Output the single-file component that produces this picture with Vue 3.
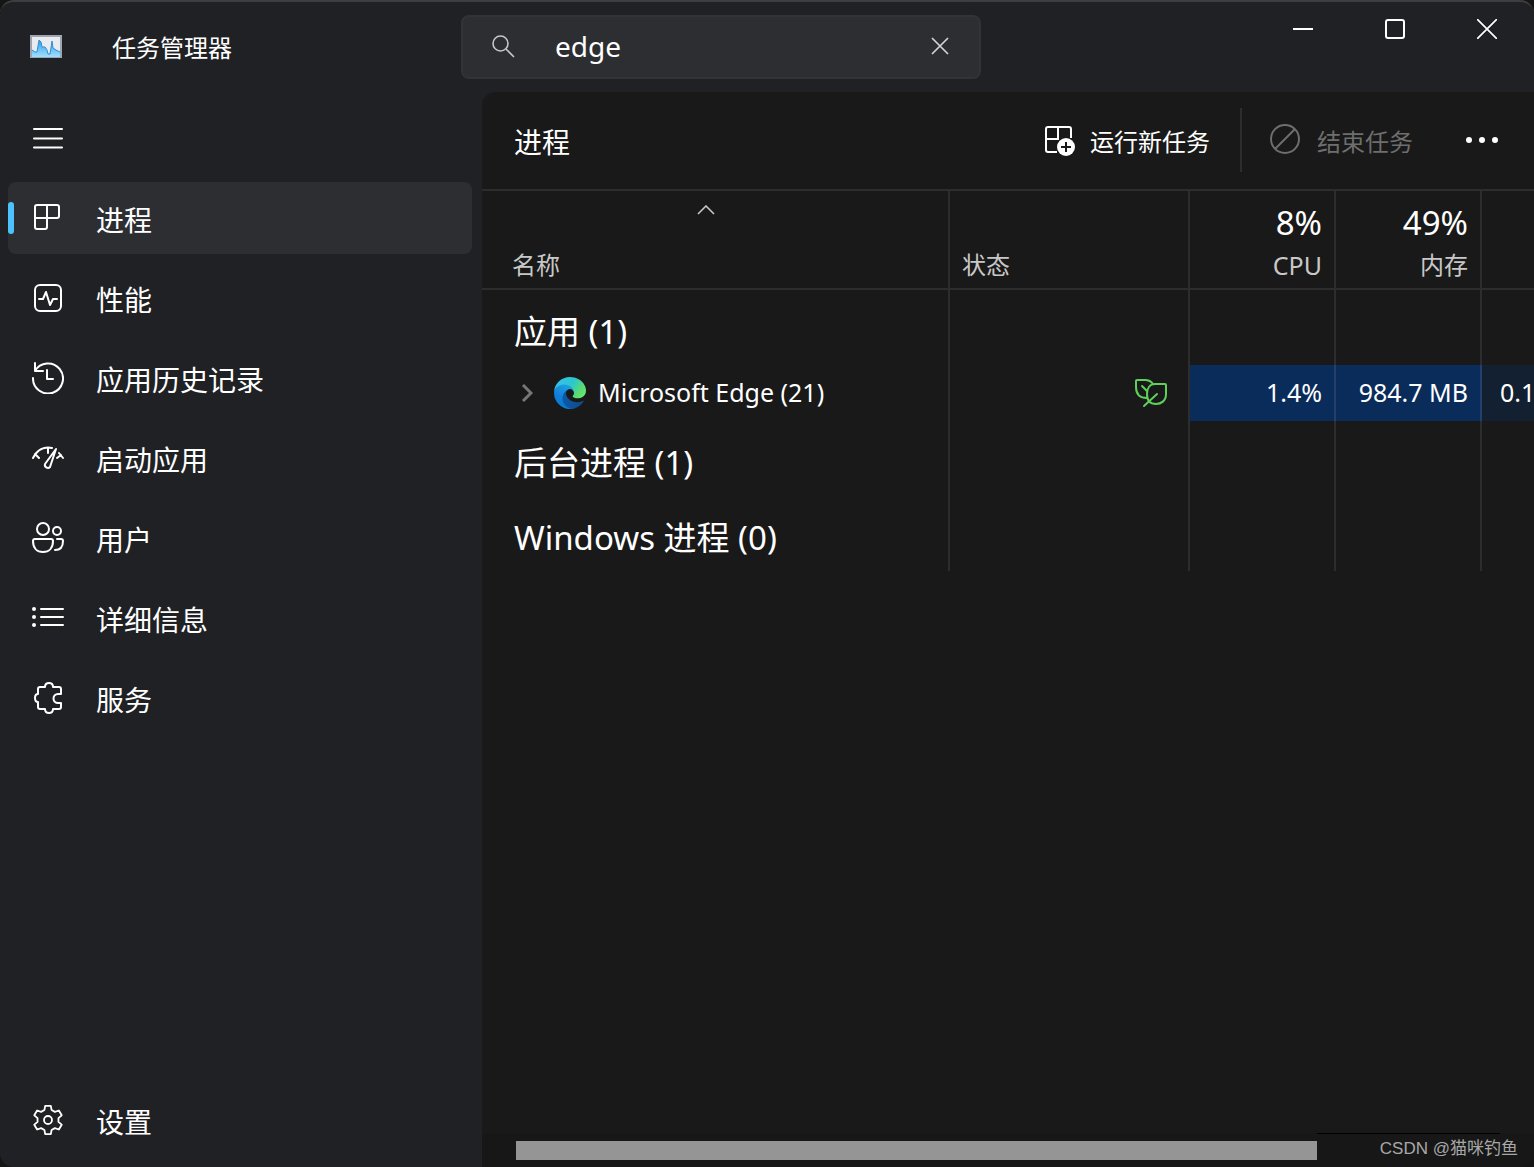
<script setup>
import { ref } from 'vue'

const query = ref('edge')

const navItems = [
  { id: 'processes', label: '进程', active: true },
  { id: 'performance', label: '性能' },
  { id: 'history', label: '应用历史记录' },
  { id: 'startup', label: '启动应用' },
  { id: 'users', label: '用户' },
  { id: 'details', label: '详细信息' },
  { id: 'services', label: '服务' }
]

// Six-toothed cog outline around the centre of a 32px box
function cogPath() {
  const local = [[-3.6, 10], [-2.8, 14.2], [2.8, 14.2], [3.6, 10]]
  const points = []
  for (let tooth = 0; tooth < 6; tooth++) {
    const a = (tooth * Math.PI) / 3
    for (const [side, out] of local) {
      const x = 16 + out * Math.sin(a) + side * Math.cos(a)
      const y = 16 - out * Math.cos(a) + side * Math.sin(a)
      points.push(`${x.toFixed(2)} ${y.toFixed(2)}`)
    }
  }
  return `M${points.join('L')}Z`
}
const cog = cogPath()
</script>

<template>
  <div class="window">
    <header class="titlebar">
      <div class="brand">
        <svg class="app-icon" width="32" height="24" viewBox="0 0 32 24" aria-hidden="true">
          <defs>
            <linearGradient id="graph" x1="0" y1="0" x2="0" y2="1">
              <stop offset="0" stop-color="#2f9be6" />
              <stop offset="1" stop-color="#9fe0ff" />
            </linearGradient>
          </defs>
          <rect width="32" height="23" fill="#9ba6b2" />
          <rect x="2" y="2" width="28" height="20" fill="#e9ebef" />
          <path d="M2 15l3 2h2L9 5l2 2 1 5h3l2 3 1 4h2l2-13 1 7 3 2 4 2v5H2z" fill="url(#graph)" />
          <path d="M2 15l3 2h2L9 5l2 2 1 5h3l2 3 1 4h2l2-13 1 7 3 2 4 2" fill="none" stroke="#2b8fd8" />
        </svg>
        <h1 class="app-name">任务管理器</h1>
      </div>
      <label class="search">
        <svg width="24" height="24" viewBox="0 0 24 24" fill="none" stroke="#c6c6c8" stroke-width="1.6" aria-hidden="true">
          <circle cx="9.5" cy="9.5" r="7.5" />
          <path d="M15 15l8 8" />
        </svg>
        <input v-model="query" class="search-input" type="text" aria-label="搜索" />
        <button class="clear" type="button" aria-label="清除" @click="query = ''">
          <svg width="18" height="18" viewBox="0 0 18 18" fill="none" stroke="#d4d4d6" stroke-width="1.7"><path d="M1 1l16 16M17 1L1 17" /></svg>
        </button>
      </label>
      <div class="window-buttons">
        <button type="button" aria-label="最小化">
          <svg width="20" height="20" viewBox="0 0 20 20" fill="none" stroke="#fff" stroke-width="2"><path d="M0 10h20" /></svg>
        </button>
        <button type="button" aria-label="最大化">
          <svg width="20" height="20" viewBox="0 0 20 20" fill="none" stroke="#fff" stroke-width="2"><rect x="1" y="1" width="18" height="18" rx="2" /></svg>
        </button>
        <button type="button" aria-label="关闭">
          <svg width="20" height="20" viewBox="0 0 20 20" fill="none" stroke="#fff" stroke-width="1.7"><path d="M0 0l20 20M20 0L0 20" /></svg>
        </button>
      </div>
    </header>

    <div class="body">
      <nav class="sidebar">
        <button class="menu" type="button" aria-label="打开导航">
          <svg width="32" height="24" viewBox="0 0 32 24" fill="none" stroke="#fff" stroke-width="2" stroke-linecap="round"><path d="M2 3h28M2 12.5h28M2 21.5h28" /></svg>
        </button>
        <button v-for="item in navItems" :key="item.id" type="button" class="nav-item" :class="{ active: item.active }">
          <svg class="nav-icon" width="32" height="32" viewBox="0 0 32 32" fill="none" stroke="#fff" stroke-width="2" stroke-linecap="round" stroke-linejoin="round" aria-hidden="true">
            <path v-if="item.id === 'processes'" d="M5 3h20a2 2 0 0 1 2 2v9a2 2 0 0 1-2 2H3V5a2 2 0 0 1 2-2zM15 3v22a2 2 0 0 1-2 2H5a2 2 0 0 1-2-2V16" />
            <g v-else-if="item.id === 'performance'">
              <rect x="3" y="3" width="26" height="26" rx="5" />
              <path d="M7 17h4l3-7 4 13 3-6h4" />
            </g>
            <path v-else-if="item.id === 'history'" d="M3 1v8h8M3 9a15 15 0 1 1-2 7M15 8v9h6" />
            <g v-else-if="item.id === 'startup'">
              <path d="M1 16C5 8 12 4 20 6M3 12l4 4M16 6v5M27 11l4 5M25 16l4-3" />
              <path d="M24 7L13 22a3 3 0 0 0 5 3L24 7z" />
            </g>
            <g v-else-if="item.id === 'users'">
              <circle cx="11" cy="7" r="6" />
              <circle cx="25" cy="9" r="4" />
              <path d="M3 17h16a2 2 0 0 1 2 2c0 7-4 11-10 11S1 26 1 19a2 2 0 0 1 2-2zM25 17h4a2 2 0 0 1 2 2c0 6-3 9-8 9" />
            </g>
            <g v-else-if="item.id === 'details'">
              <path d="M9 7h22M9 15h22M9 23h22" />
              <path d="M2 7h.01M2 15h.01M2 23h.01" stroke-width="4" />
            </g>
            <path v-else d="M8 5h5c0-2 1-4 4-4s4 2 4 4h6a2 2 0 0 1 2 2v5h-3a4 4 0 0 0 0 9h3v4a2 2 0 0 1-2 2h-6c0 2-1 4-4 4s-4-2-4-4H8a2 2 0 0 1-2-2v-5c-2 0-3-2-3-4s1-4 3-4V7a2 2 0 0 1 2-2z" />
          </svg>
          <span class="nav-label">{{ item.label }}</span>
        </button>
        <button type="button" class="nav-item settings">
          <svg class="nav-icon" width="32" height="32" viewBox="0 0 32 32" fill="none" stroke="#fff" stroke-width="1.8" stroke-linejoin="round" aria-hidden="true">
            <path :d="cog" />
            <circle cx="16" cy="16" r="4" />
          </svg>
          <span class="nav-label">设置</span>
        </button>
      </nav>

      <main class="content">
        <div class="toolbar">
          <h2 class="page-title">进程</h2>
          <button class="tool run" type="button">
            <svg width="32" height="32" viewBox="0 0 32 32" fill="none" stroke="#fff" stroke-width="2" stroke-linejoin="round" aria-hidden="true">
              <path d="M27 13V4a2 2 0 0 0-2-2H4a2 2 0 0 0-2 2v21a2 2 0 0 0 2 2h9M14 2v12M2 14h13" />
              <circle cx="22" cy="22" r="9" fill="#fff" stroke="none" />
              <path d="M22 17v10M17 22h10" stroke="#191919" />
            </svg>
            <span>运行新任务</span>
          </button>
          <button class="tool end" type="button" disabled>
            <svg width="32" height="32" viewBox="0 0 32 32" fill="none" stroke="#6e6e6e" stroke-width="2" aria-hidden="true">
              <circle cx="16" cy="16" r="14" />
              <path d="M6 26L26 6" />
            </svg>
            <span>结束任务</span>
          </button>
          <button class="more" type="button" aria-label="更多选项">
            <svg width="32" height="8" viewBox="0 0 32 8" fill="#fff"><circle cx="3" cy="4" r="3" /><circle cx="16" cy="4" r="3" /><circle cx="29" cy="4" r="3" /></svg>
          </button>
        </div>

        <div class="table-area">
          <table class="processes">
            <colgroup>
              <col class="col-name" />
              <col class="col-status" />
              <col class="col-metric" />
              <col class="col-metric" />
              <col />
            </colgroup>
            <thead>
              <tr>
                <th class="name" scope="col" aria-sort="ascending">
                  <svg class="caret" width="18" height="10" viewBox="0 0 18 10" fill="none" stroke="#c8c8c8" stroke-width="1.6"><path d="M1 9l8-8 8 8" /></svg>
                  <span class="label">名称</span>
                </th>
                <th class="status" scope="col"><span class="label">状态</span></th>
                <th class="metric" scope="col"><span class="total">8%</span><span class="label latin">CPU</span></th>
                <th class="metric" scope="col"><span class="total">49%</span><span class="label">内存</span></th>
                <td></td>
              </tr>
            </thead>
            <tbody>
              <tr class="group"><th scope="rowgroup">应用 (1)</th><td></td><td></td><td></td><td></td></tr>
              <tr class="process">
                <td>
                  <div class="process-name">
                    <svg class="expand" width="12" height="18" viewBox="0 0 12 18" fill="none" stroke="#767676" stroke-width="3"><path d="M2 1l8 8-8 8" /></svg>
                    <svg width="32" height="32" viewBox="0 0 256 256" aria-hidden="true">
                      <defs>
                        <linearGradient id="edge-dark" x1="0.1" y1="0.6" x2="1" y2="0.6"><stop offset="0" stop-color="#0c59a4" /><stop offset="1" stop-color="#114a8b" /></linearGradient>
                        <linearGradient id="edge-blue" x1="0.7" y1="0.2" x2="0.3" y2="1"><stop offset="0" stop-color="#1b9de2" /><stop offset="0.5" stop-color="#1480d8" /><stop offset="1" stop-color="#0078d4" /></linearGradient>
                        <linearGradient id="edge-green" x1="0" y1="0.3" x2="1" y2="0.8"><stop offset="0" stop-color="#35c1f1" /><stop offset="0.45" stop-color="#2dc6cc" /><stop offset="0.8" stop-color="#5bdc70" /><stop offset="1" stop-color="#66eb6e" /></linearGradient>
                      </defs>
                      <path fill="url(#edge-dark)" d="M231 190.500c-3.400 1.800-6.900 3.400-10.500 4.700a101.500 101.500 0 0 1-35.900 6.400c-47.300 0-88.500-32.500-88.500-74.300a31.500 31.500 0 0 1 16.400-27.300c-42.800 1.800-53.800 46.400-53.800 72.500 0 74 68.100 81.400 82.800 81.400 7.900 0 19.800-2.300 27-4.600l1.300-.4a128.300 128.300 0 0 0 66.600-52.800 4 4 0 0 0-5.400-5.600z" />
                      <path fill="url(#edge-blue)" d="M105.700 241.400a79.200 79.200 0 0 1-22.700-21.300 80.700 80.700 0 0 1 29.500-120c3.200-1.500 8.500-4.100 15.600-4a32.400 32.400 0 0 1 25.700 13 31.900 31.900 0 0 1 6.300 18.700c0-.2 24.500-79.600-80-79.600-43.900 0-80 41.600-80 78.200a130.200 130.200 0 0 0 12.100 56 128 128 0 0 0 156.400 67 75.500 75.500 0 0 1-62.800-8z" />
                      <path fill="url(#edge-green)" d="M152.300 148.900c-.9 1-3.400 2.500-3.400 5.600 0 2.600 1.700 5.200 4.800 7.300 14.300 10 41.400 8.600 41.500 8.600a59.600 59.600 0 0 0 30.300-8.300 61.400 61.400 0 0 0 30.400-52.900c.3-22.400-8-37.300-11.300-43.900C223.500 23.900 177.700 0 128 0A128 128 0 0 0 0 126.200c.5-36.500 36.800-66 80-66 3.500 0 23.500.3 42 10.100 16.300 8.600 24.900 19 30.800 29.200 6.200 10.700 7.300 24.100 7.300 29.500 0 5.300-2.700 13.300-7.800 19.900z" />
                    </svg>
                    <span>Microsoft Edge (21)</span>
                  </div>
                </td>
                <td class="efficiency">
                  <svg width="34" height="30" viewBox="0 0 34 30" fill="none" stroke="#5fd05a" stroke-width="2" stroke-linecap="round" stroke-linejoin="round" role="img" aria-label="效率模式">
                    <path d="M19 6C17 3 14 2 11 2H3a1 1 0 0 0-1 1v6c0 7 4 11 11 11" />
                    <path d="M21 6h10a1 1 0 0 1 1 1v9c0 7-5 10-10 10-6 0-9-4-9-10S16 6 21 6z" />
                    <path d="M8 8l5 5M23 16L10 28" />
                  </svg>
                </td>
                <td class="metric hot">1.4%</td>
                <td class="metric hot">984.7 MB</td>
                <td class="disk">0.1</td>
              </tr>
              <tr class="group"><th scope="rowgroup">后台进程 (1)</th><td></td><td></td><td></td><td></td></tr>
              <tr class="group"><th scope="rowgroup">Windows 进程 (0)</th><td></td><td></td><td></td><td></td></tr>
            </tbody>
          </table>
        </div>

        <footer class="scroll-row">
          <div class="scroll-thumb"></div>
          <div class="scroll-rest"></div>
          <span class="watermark">CSDN @猫咪钓鱼</span>
        </footer>
      </main>
    </div>
  </div>
</template>

<style>
html,
body {
  margin: 0;
  background: #151515;
}
</style>

<style scoped>
* {
  box-sizing: border-box;
}

.window {
  display: flex;
  flex-direction: column;
  min-height: 100vh;
  overflow: hidden;
  border-top: 2px solid #3e3e40;
  border-radius: 14px;
  background: #202125;
  color: #fff;
  font-family: "Noto Sans", "Noto Sans CJK SC", sans-serif;
  font-size: 24px;
  line-height: 36px;
}

button {
  display: flex;
  align-items: center;
  padding: 0;
  border: 0;
  background: none;
  color: inherit;
  font: inherit;
}

svg {
  flex: none;
  display: block;
}

h1,
h2 {
  margin: 0;
  font-weight: 400;
}

.titlebar {
  display: grid;
  grid-template-columns: 461px 520px 1fr;
  height: 90px;
}

.brand {
  display: flex;
  align-items: center;
  gap: 50px;
  height: 90px;
  padding: 0 0 0 30px;
}

.app-name {
  padding-top: 2px;
  font-size: 24px;
}

.search {
  display: flex;
  align-items: center;
  height: 64px;
  margin-top: 13px;
  padding: 0 30px 2px 28px;
  border: 2px solid #323337;
  border-radius: 8px;
  background: #2d2e32;
}

.search-input {
  flex: 1;
  min-width: 0;
  margin-left: 40px;
  padding: 0;
  border: 0;
  outline: 0;
  background: none;
  color: #fff;
  font: inherit;
  font-size: 28px;
}

.window-buttons {
  display: flex;
  justify-content: flex-end;
  padding-right: 1px;
}

.window-buttons button {
  justify-content: center;
  width: 92px;
  height: 54px;
}

.body {
  display: flex;
  flex: 1;
}

.sidebar {
  display: flex;
  flex: none;
  flex-direction: column;
  gap: 8px;
  width: 482px;
  padding: 10px 10px 11px 8px;
}

.menu {
  height: 72px;
  padding-left: 24px;
}

.nav-item {
  position: relative;
  gap: 32px;
  height: 72px;
  padding: 4px 0 0 24px;
  border-radius: 8px;
  font-size: 28px;
  text-align: left;
}

.nav-icon {
  margin-bottom: 4px;
}

.nav-item.active {
  background: #2d2e32;
}

.nav-item.active::before {
  content: "";
  position: absolute;
  left: 0;
  top: 20px;
  width: 6px;
  height: 32px;
  border-radius: 3px;
  background: #4cc2ff;
}

.settings {
  margin-top: auto;
}

.content {
  display: flex;
  flex: 1;
  flex-direction: column;
  min-width: 0;
  overflow: hidden;
  border-top-left-radius: 14px;
  background: #191919;
}

.toolbar {
  display: flex;
  align-items: center;
  height: 99px;
  padding: 0 36px 2px 32px;
  border-bottom: 2px solid #2d2d2d;
}

.page-title {
  flex: 1;
  padding-top: 4px;
  font-size: 28px;
}

.tool {
  height: 64px;
}

.tool span {
  padding-top: 4px;
}

.run {
  gap: 14px;
  padding-right: 30px;
  border-right: 2px solid #2d2d2d;
}

.run svg {
  margin-top: 2px;
}

.end {
  gap: 16px;
  padding-left: 27px;
  color: #6e6e6e;
}

.end svg {
  margin-bottom: 2px;
}

.more {
  height: 64px;
  margin-left: 53px;
}

.table-area {
  flex: 1;
  overflow: hidden;
}

.processes {
  width: 100%;
  border-spacing: 0;
  table-layout: fixed;
}

.col-name {
  width: 468px;
}

.col-status {
  width: 240px;
}

.col-metric {
  width: 146px;
}

th,
td {
  padding: 0;
  border-right: 2px solid #2d2d2d;
  font-weight: 400;
  text-align: left;
  white-space: nowrap;
}

th:last-child,
td:last-child {
  border-right: 0;
}

thead th,
thead td {
  height: 99px;
  padding-bottom: 2px;
  border-bottom: 2px solid #2d2d2d;
  color: #c8c8c8;
  vertical-align: bottom;
}

.name {
  padding-left: 30px;
}

.status {
  padding-left: 12px;
}

.caret {
  margin: 0 auto 29px 185px;
}

.label,
.total {
  display: block;
  line-height: 42px;
}

.latin {
  font-size: 25px;
}

.total {
  color: #fff;
  font-size: 33px;
}

.metric {
  padding-right: 12px;
  text-align: right;
}

.group th {
  height: 75px;
  padding: 8px 0 0 32px;
  font-size: 33px;
}

.process td {
  height: 56px;
  padding-bottom: 3px;
  font-size: 25px;
}

.process-name {
  display: flex;
  align-items: center;
  padding-left: 39px;
}

.process-name svg,
.efficiency svg {
  margin-top: 2px;
}

.expand {
  margin-right: 21px;
}

.process-name span {
  margin-left: 12px;
}

.efficiency svg {
  margin-left: auto;
  margin-right: 20px;
}

.process .hot {
  border-right-color: #22406a;
  background: #0a2c5a;
}

.process .disk {
  padding-left: 18px;
  background: #132031;
}

.scroll-row {
  position: relative;
  display: flex;
  height: 34px;
  padding: 0 34px;
  background: #171717;
}

.scroll-thumb {
  flex: 801;
  height: 19px;
  margin-top: 8px;
  background: #959595;
}

.scroll-rest {
  flex: 183;
  height: 1px;
  background: #000;
}

.watermark {
  position: absolute;
  right: 16px;
  bottom: 6px;
  color: #a8a8a8;
  font-family: "Liberation Sans", "Noto Sans CJK SC", sans-serif;
  font-size: 17px;
  line-height: 24px;
}
</style>
